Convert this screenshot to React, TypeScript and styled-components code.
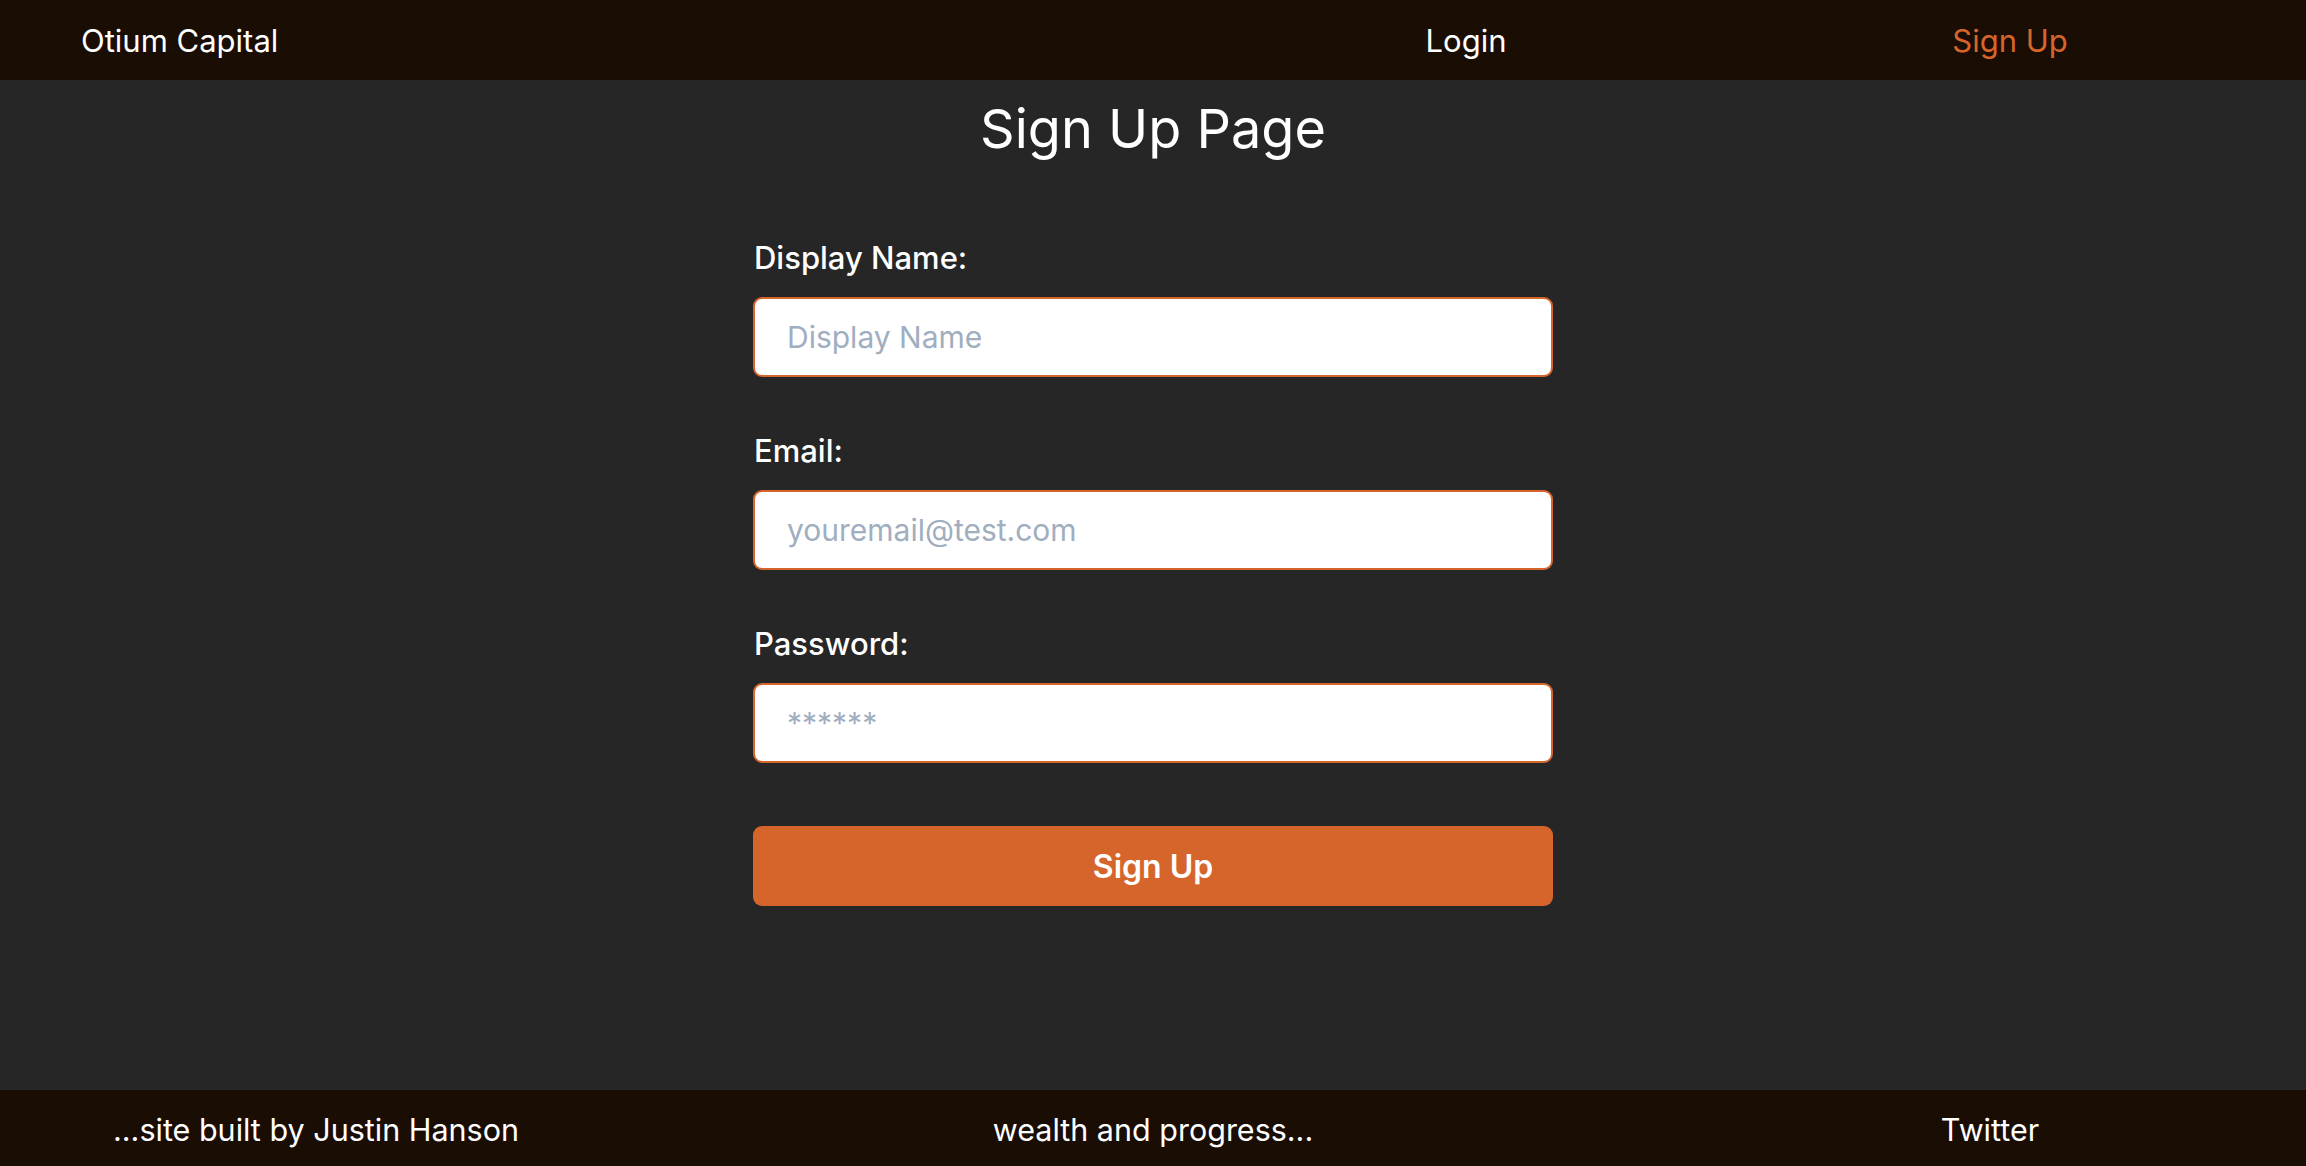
import React from 'react';
import styled, { createGlobalStyle } from 'styled-components';

const GlobalStyle = createGlobalStyle`
  * { box-sizing: border-box; }
  html, body { margin: 0; padding: 0; }
  body {
    background-color: #262626;
    font-family: Inter, "Noto Sans", "Liberation Sans", sans-serif;
    color: #ffffff;
  }
`;

const Page = styled.div`
  display: flex;
  flex-direction: column;
  min-height: 100vh;
  background-color: #262626;
`;

const Header = styled.header`
  display: flex;
  align-items: center;
  height: 80px;
  background-color: #190d04;
  padding: 0 24px 0 81px;
  font-size: 31px;
  font-weight: 400;
`;

const Brand = styled.a`
  color: #ffffff;
  text-decoration: none;
`;

const Nav = styled.nav`
  display: grid;
  grid-template-columns: 544px 544px;
  margin-left: auto;
`;

const NavLink = styled.a<{ $active?: boolean }>`
  text-align: center;
  color: ${(p) => (p.$active ? '#d6652b' : '#ffffff')};
  text-decoration: none;
`;

const Main = styled.main`
  flex: 1;
  display: flex;
  flex-direction: column;
  align-items: center;
`;

const Title = styled.h1`
  margin: 15px 0 0;
  font-size: 54px;
  line-height: 68px;
  font-weight: 400;
`;

const Form = styled.form`
  display: flex;
  flex-direction: column;
  width: 800px;
  margin-top: 76px;
`;

const Field = styled.div`
  display: flex;
  flex-direction: column;
  gap: 21px;
  margin-bottom: 55px;

  &:last-of-type {
    margin-bottom: 63px;
  }
`;

const Label = styled.label`
  font-size: 31px;
  line-height: 37px;
  font-weight: 500;
  padding-left: 1px;
`;

const Input = styled.input`
  height: 80px;
  width: 100%;
  border: 2px solid #d6652b;
  border-radius: 9px;
  background: #ffffff;
  padding: 0 32px;
  font-family: inherit;
  font-size: 30px;
  color: #2d3748;
  outline: none;

  &::placeholder {
    color: #a0aec0;
  }
`;

const Button = styled.button`
  height: 80px;
  width: 100%;
  border: none;
  border-radius: 9px;
  background-color: #d6652b;
  color: #ffffff;
  font-family: inherit;
  font-size: 32px;
  font-weight: 600;
  cursor: pointer;
`;

const Footer = styled.footer`
  display: grid;
  grid-template-columns: 1fr 2fr 1fr;
  align-items: center;
  height: 76px;
  padding: 2px 37px 0;
  background-color: #190d04;
  font-size: 30.5px;
`;

const FooterItem = styled.div`
  text-align: center;
`;

const FooterLink = styled.a`
  color: #ffffff;
  text-decoration: none;
`;

export default function App() {
  return (
    <>
      <GlobalStyle />
      <Page>
        <Header>
          <Brand>Otium Capital</Brand>
          <Nav>
            <NavLink>Login</NavLink>
            <NavLink $active>Sign Up</NavLink>
          </Nav>
        </Header>
        <Main>
          <Title>Sign Up Page</Title>
          <Form onSubmit={(e) => e.preventDefault()}>
            <Field>
              <Label htmlFor="displayName">Display Name:</Label>
              <Input id="displayName" type="text" placeholder="Display Name" />
            </Field>
            <Field>
              <Label htmlFor="email">Email:</Label>
              <Input id="email" type="email" placeholder="youremail@test.com" />
            </Field>
            <Field>
              <Label htmlFor="password">Password:</Label>
              <Input id="password" type="password" placeholder="******" />
            </Field>
            <Button type="submit">Sign Up</Button>
          </Form>
        </Main>
        <Footer>
          <FooterItem>...site built by Justin Hanson</FooterItem>
          <FooterItem>wealth and progress...</FooterItem>
          <FooterItem>
            <FooterLink>Twitter</FooterLink>
          </FooterItem>
        </Footer>
      </Page>
    </>
  );
}
